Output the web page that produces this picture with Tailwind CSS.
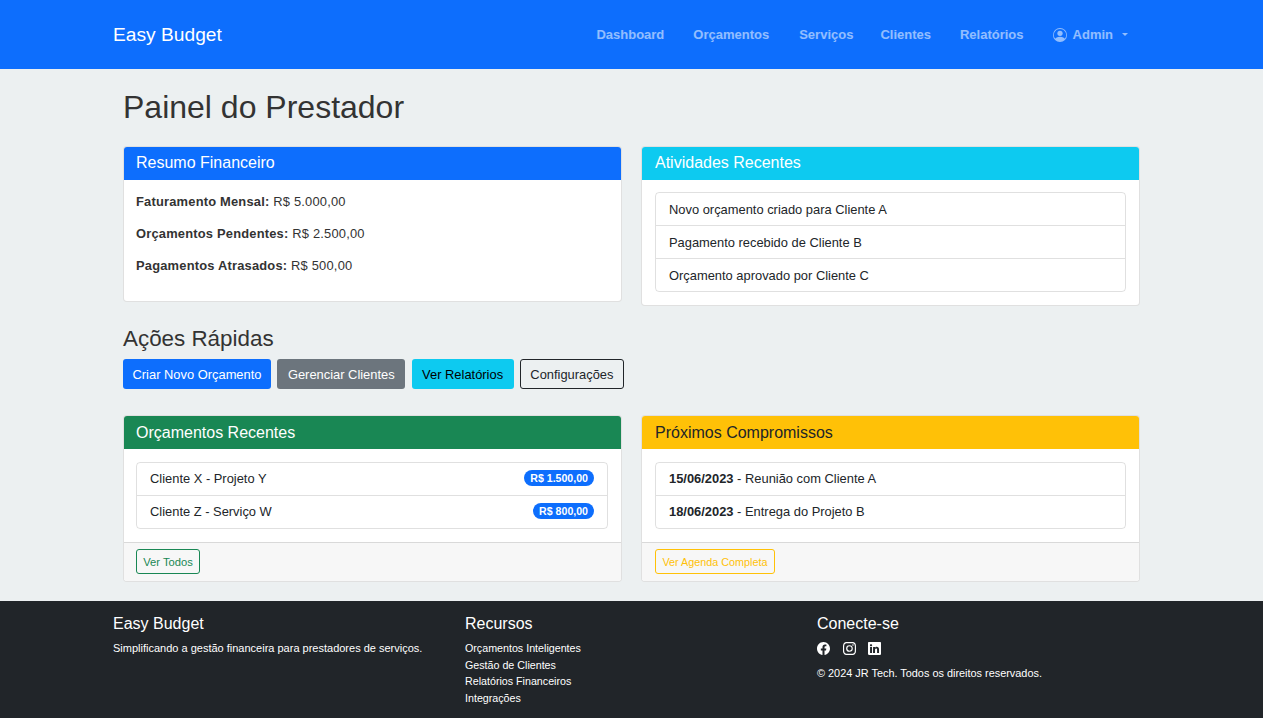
<!doctype html>
<html lang="pt-BR">
  <head>
    <meta charset="UTF-8" />
    <meta name="viewport" content="width=device-width, initial-scale=1.0" />
    <title>Easy Budget</title>
    <script src="https://cdn.jsdelivr.net/npm/@tailwindcss/browser@4"></script>
  </head>
  <body class="bg-[#ecf0f1] text-[#212529] text-[12.9px] leading-[21px] font-['Liberation_Sans',Arial,sans-serif] h-[718px] overflow-hidden">
    <nav class="bg-[#0d6efd] h-[69px] pl-[113px] pr-[135px] flex items-center justify-between">
      <a class="text-white text-[19.2px] leading-[28px]">Easy Budget</a>
      <ul class="flex items-center gap-[29px] font-bold text-[13px] text-white/55">
        <li>Dashboard</li>
        <li>Orçamentos</li>
        <li class="pl-[1px]">Serviços</li>
        <li class="-ml-[2px]">Clientes</li>
        <li>Relatórios</li>
        <li class="flex items-center">
          <svg class="w-[14px] h-[14px] mr-[6px]" viewBox="0 0 16 16" fill="currentColor">
            <path d="M11 6a3 3 0 1 1-6 0 3 3 0 0 1 6 0z"/>
            <path fill-rule="evenodd" d="M0 8a8 8 0 1 1 16 0A8 8 0 0 1 0 8zm8-7a7 7 0 0 0-5.468 11.37C3.242 11.226 4.805 10 8 10s4.757 1.225 5.468 2.37A7 7 0 0 0 8 1z"/>
          </svg>
          Admin
          <span class="ml-[9px] w-0 h-0 border-x-[3.5px] border-x-transparent border-t-[3.5px] border-t-current"></span>
        </li>
      </ul>
    </nav>

    <main class="pl-[123px] pr-[123px] h-[532px]">
      <h1 class="text-[32px] leading-[42px] text-[#333] pt-[17px] h-[78px] box-content -mb-[18px]">Painel do Prestador</h1>

      <div class="grid grid-cols-2 gap-x-[19px] items-start">
        <section class="bg-white border border-black/12 rounded-[4px] overflow-hidden h-[156px] text-[#333]">
          <h5 class="bg-[#0d6efd] text-white text-[16px] leading-[19px] px-[12px] pt-[6px] pb-[8px]">Resumo Financeiro</h5>
          <div class="px-[12px] pt-[11px]">
            <p class="mb-[11px] tracking-[0.2px]"><strong>Faturamento Mensal:</strong> R$ 5.000,00</p>
            <p class="mb-[11px] tracking-[0.2px]"><strong>Orçamentos Pendentes:</strong> R$ 2.500,00</p>
            <p class="tracking-[0.2px]"><strong>Pagamentos Atrasados:</strong> R$ 500,00</p>
          </div>
        </section>
        <section class="bg-white border border-black/12 rounded-[4px] overflow-hidden h-[160px]">
          <h5 class="bg-[#0dcaf0] text-white text-[16px] leading-[19px] px-[13px] pt-[6px] pb-[8px]">Atividades Recentes</h5>
          <div class="pl-[13px] pr-[13px] py-[12px]">
            <ul class="border border-black/12 rounded-[4px] divide-y divide-black/12">
              <li class="px-[13px] py-[6px] h-[33px]">Novo orçamento criado para Cliente A</li>
              <li class="px-[13px] py-[6px] h-[33px]">Pagamento recebido de Cliente B</li>
              <li class="px-[13px] py-[6px] h-[32px]">Orçamento aprovado por Cliente C</li>
            </ul>
          </div>
        </section>
      </div>

      <h3 class="text-[22.4px] leading-[28px] text-[#333] mt-[19px] mb-[3px] h-[31px]">Ações Rápidas</h3>
      <div class="flex gap-[6.3px]">
        <a class="h-[30px] w-[148px] flex items-center justify-center rounded-[3px] bg-[#0d6efd] text-white">Criar Novo Orçamento</a>
        <a class="h-[30px] w-[128px] flex items-center justify-center rounded-[3px] bg-[#6c757d] text-white">Gerenciar Clientes</a>
        <a class="h-[30px] w-[102px] flex items-center justify-center rounded-[3px] bg-[#0dcaf0] text-black">Ver Relatórios</a>
        <a class="h-[30px] w-[104px] flex items-center justify-center rounded-[3px] border border-[#212529] text-[#212529]">Configurações</a>
      </div>

      <div class="grid grid-cols-2 gap-x-[19px] mt-[26px]">
        <section class="bg-white border border-black/12 rounded-[4px] overflow-hidden h-[167px] flex flex-col">
          <h5 class="bg-[#198754] text-white text-[16px] leading-[19px] px-[12px] pt-[7px] pb-[7px]">Orçamentos Recentes</h5>
          <div class="pl-[12px] pr-[13px] pt-[13px] flex-1">
            <ul class="border border-black/12 rounded-[4px] divide-y divide-black/12">
              <li class="pl-[13px] pr-[13px] pb-[2px] h-[33px] flex items-center justify-between">Cliente X - Projeto Y
                <span class="bg-[#0d6efd] text-white font-bold text-[10.6px] leading-[16px] px-[6px] rounded-full">R$ 1.500,00</span></li>
              <li class="pl-[13px] pr-[13px] pb-[2px] h-[32px] flex items-center justify-between">Cliente Z - Serviço W
                <span class="bg-[#0d6efd] text-white font-bold text-[10.6px] leading-[16px] px-[6px] rounded-full">R$ 800,00</span></li>
            </ul>
          </div>
          <div class="bg-[#f7f7f7] border-t border-black/12 h-[39px] px-[12px] pt-[6px]">
            <a class="inline-block w-[64px] text-center border border-[#198754] text-[#198754] rounded-[3px] text-[11.2px] leading-[23px] pt-[1px] h-[25px]">Ver Todos</a>
          </div>
        </section>
        <section class="bg-white border border-black/12 rounded-[4px] overflow-hidden h-[167px] flex flex-col">
          <h5 class="bg-[#ffc107] text-[#212529] text-[16px] leading-[19px] px-[13px] pt-[7px] pb-[7px]">Próximos Compromissos</h5>
          <div class="pl-[13px] pr-[13px] pt-[13px] flex-1">
            <ul class="border border-black/12 rounded-[4px] divide-y divide-black/12">
              <li class="px-[13px] pb-[2px] h-[33px] flex items-center whitespace-pre"><strong>15/06/2023</strong> - Reunião com Cliente A</li>
              <li class="px-[13px] pb-[2px] h-[32px] flex items-center whitespace-pre"><strong>18/06/2023</strong> - Entrega do Projeto B</li>
            </ul>
          </div>
          <div class="bg-[#f7f7f7] border-t border-black/12 h-[39px] px-[13px] pt-[6px]">
            <a class="inline-block w-[120px] text-center border border-[#ffc107] text-[#ffc107] rounded-[3px] text-[10.8px] leading-[23px] pt-[1px] h-[25px]">Ver Agenda Completa</a>
          </div>
        </section>
      </div>
    </main>

    <footer class="bg-[#212529] text-white h-[117px] pl-[113px] pt-[13px] grid grid-cols-[352px_352px_1fr] text-[10.9px] leading-[16.5px]">
      <div>
        <h5 class="text-[16px] leading-[20px] mb-[6px]">Easy Budget</h5>
        <p class="text-[11px]">Simplificando a gestão financeira para prestadores de serviços.</p>
      </div>
      <div>
        <h5 class="text-[16px] leading-[20px] mb-[6px]">Recursos</h5>
        <ul class="text-[10.7px]">
          <li>Orçamentos Inteligentes</li>
          <li>Gestão de Clientes</li>
          <li>Relatórios Financeiros</li>
          <li>Integrações</li>
        </ul>
      </div>
      <div>
        <h5 class="text-[16px] leading-[20px] mb-[6px]">Conecte-se</h5>
        <div class="flex gap-[12.5px] h-[16px] items-center mb-[9px]">
          <svg class="w-[13px] h-[13px]" viewBox="0 0 16 16" fill="currentColor"><path d="M16 8.049c0-4.446-3.582-8.05-8-8.05C3.58 0-.002 3.603-.002 8.05c0 4.017 2.926 7.347 6.75 7.951v-5.625h-2.03V8.05H6.75V6.275c0-2.017 1.195-3.131 3.022-3.131.876 0 1.791.157 1.791.157v1.98h-1.009c-.993 0-1.303.621-1.303 1.258v1.51h2.218l-.354 2.326H9.25V16c3.824-.604 6.75-3.934 6.75-7.951z"/></svg>
          <svg class="w-[13px] h-[13px]" viewBox="0 0 16 16" fill="currentColor"><path d="M8 0C5.829 0 5.556.01 4.703.048 3.85.088 3.269.222 2.76.42a3.917 3.917 0 0 0-1.417.923A3.927 3.927 0 0 0 .42 2.76C.222 3.268.087 3.85.048 4.7.01 5.555 0 5.827 0 8.001c0 2.172.01 2.444.048 3.297.04.852.174 1.433.372 1.942.205.526.478.972.923 1.417.444.445.89.719 1.416.923.51.198 1.09.333 1.942.372C5.555 15.99 5.827 16 8 16s2.444-.01 3.298-.048c.851-.04 1.434-.174 1.943-.372a3.916 3.916 0 0 0 1.416-.923c.445-.445.718-.891.923-1.417.197-.509.332-1.09.372-1.942C15.99 10.445 16 10.173 16 8s-.01-2.445-.048-3.299c-.04-.851-.175-1.433-.372-1.941a3.926 3.926 0 0 0-.923-1.417A3.911 3.911 0 0 0 13.24.42c-.51-.198-1.092-.333-1.943-.372C10.443.01 10.172 0 7.998 0h.003zm-.717 1.442h.718c2.136 0 2.389.007 3.232.046.78.035 1.204.166 1.486.275.373.145.64.319.92.599.28.28.453.546.598.92.11.281.24.705.275 1.485.039.843.047 1.096.047 3.231s-.008 2.389-.047 3.232c-.035.78-.166 1.203-.275 1.485a2.47 2.47 0 0 1-.599.919c-.28.28-.546.453-.92.598-.28.11-.704.24-1.485.276-.843.038-1.096.047-3.232.047s-2.39-.009-3.233-.047c-.78-.036-1.203-.166-1.485-.276a2.478 2.478 0 0 1-.92-.598 2.48 2.48 0 0 1-.6-.92c-.109-.281-.24-.705-.275-1.485-.038-.843-.046-1.096-.046-3.233 0-2.136.008-2.388.046-3.231.036-.78.166-1.204.276-1.486.145-.373.319-.64.599-.92.28-.28.546-.453.92-.598.282-.11.705-.24 1.485-.276.738-.034 1.024-.044 2.515-.045v.002zm4.988 1.328a.96.96 0 1 0 0 1.92.96.96 0 0 0 0-1.92zm-4.27 1.122a4.109 4.109 0 1 0 0 8.217 4.109 4.109 0 0 0 0-8.217zm0 1.441a2.667 2.667 0 1 1 0 5.334 2.667 2.667 0 0 1 0-5.334z"/></svg>
          <svg class="w-[13px] h-[13px]" viewBox="0 0 16 16" fill="currentColor"><path d="M0 1.146C0 .513.526 0 1.175 0h13.65C15.474 0 16 .513 16 1.146v13.708c0 .633-.526 1.146-1.175 1.146H1.175C.526 16 0 15.487 0 14.854V1.146zm4.943 12.248V6.169H2.542v7.225h2.401zm-1.2-8.212c.837 0 1.358-.554 1.358-1.248-.015-.709-.52-1.248-1.342-1.248-.822 0-1.359.54-1.359 1.248 0 .694.521 1.248 1.327 1.248h.016zm4.908 8.212V9.359c0-.216.016-.432.08-.586.173-.431.568-.878 1.232-.878.869 0 1.216.662 1.216 1.634v3.865h2.401V9.25c0-2.22-1.184-3.252-2.764-3.252-1.274 0-1.845.7-2.165 1.193v.025h-.016a5.54 5.54 0 0 1 .016-.025V6.169h-2.4c.03.678 0 7.225 0 7.225h2.4z"/></svg>
        </div>
        <p>© 2024 JR Tech. Todos os direitos reservados.</p>
      </div>
    </footer>
  </body>
</html>
